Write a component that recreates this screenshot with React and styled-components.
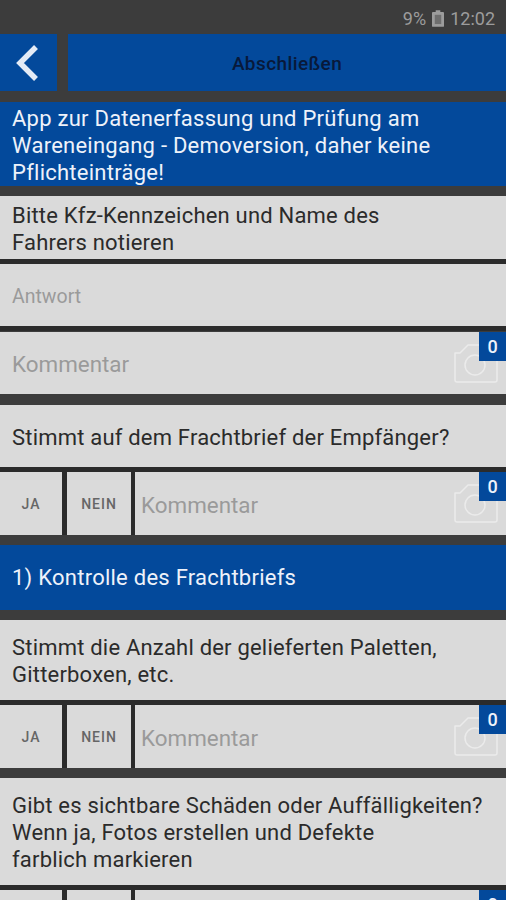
import React from 'react';
import styled, { createGlobalStyle } from 'styled-components';

const GlobalStyle = createGlobalStyle`
  html, body {
    margin: 0;
    padding: 0;
    background: #3c3c3c;
    overflow: hidden;
  }
`;

const Page = styled.div`
  width: 506px;
  height: 900px;
  overflow: hidden;
  background: #3c3c3c;
  font-family: Roboto, "Liberation Sans", sans-serif;
  display: flex;
  flex-direction: column;
`;

const StatusBar = styled.div`
  height: 34px;
  flex: none;
  display: flex;
  align-items: center;
  justify-content: flex-end;
  gap: 6px;
  padding: 2px 11px 0 0;
  box-sizing: border-box;
  color: #9c9c9c;
  font-size: 18px;
`;

const Header = styled.div`
  height: 57px;
  flex: none;
  display: flex;
  gap: 11px;
  margin-bottom: 11px;
`;

const BackButton = styled.div`
  width: 57px;
  background: #03499b;
  display: flex;
  align-items: center;
  padding-left: 15px;
  box-sizing: border-box;
`;

const TitleBar = styled.div`
  flex: 1;
  background: #03499b;
  color: #08193a;
  font-size: 19px;
  font-weight: 500;
  letter-spacing: 0.4px;
  display: flex;
  align-items: center;
  justify-content: center;
  padding-top: 2px;
  box-sizing: border-box;
`;

const Banner = styled.div`
  flex: none;
  height: ${(p) => p.$height}px;
  margin-bottom: 10px;
  background: #03499b;
  color: #eef2fa;
  font-size: 22px;
  letter-spacing: 0.25px;
  line-height: 27px;
  padding: ${(p) => p.$top}px 12px 0;
  box-sizing: border-box;
`;

const Question = styled.div`
  flex: none;
  height: ${(p) => p.$height}px;
  margin-bottom: 5px;
  background: #dadada;
  color: #2b2b2b;
  font-size: 22px;
  letter-spacing: 0.2px;
  line-height: 27px;
  padding: ${(p) => p.$top}px 12px 0;
  box-sizing: border-box;
  box-shadow: 0 5px 0 #2b2b2b;
`;

const Field = styled.div`
  position: relative;
  flex: ${(p) => (p.$grow ? 1 : 'none')};
  height: ${(p) => (p.$grow ? 63 : 62)}px;
  margin-bottom: ${(p) => (p.$grow ? 0 : p.$gap)}px;
  background: #dadada;
  color: #9a9a9a;
  font-size: ${(p) => p.$size}px;
  display: flex;
  align-items: center;
  padding: 2px 0 0 ${(p) => (p.$grow ? 6 : 12)}px;
  box-sizing: border-box;
  box-shadow: ${(p) => (p.$divider ? '0 5px 0 #2b2b2b' : 'none')};
`;

const AnswerRow = styled.div`
  flex: none;
  height: 63px;
  margin-bottom: 10px;
  display: flex;
  background: #2b2b2b;
`;

const ChoiceButton = styled.div`
  flex: none;
  width: ${(p) => p.$width}px;
  margin-right: ${(p) => p.$gap}px;
  background: #dadada;
  color: #666;
  font-size: 14px;
  font-weight: 500;
  letter-spacing: 1px;
  display: flex;
  align-items: center;
  justify-content: center;
`;

const CameraPlace = styled.div`
  position: absolute;
  top: 12px;
  right: 8px;
  line-height: 0;
`;

const Badge = styled.div`
  position: absolute;
  top: 0;
  right: 0;
  width: 27px;
  height: 29px;
  background: #03499b;
  color: #eef2fa;
  font-size: 18px;
  font-weight: 500;
  display: flex;
  align-items: center;
  justify-content: center;
`;

const BackIcon = () => (
  <svg width="26" height="38" viewBox="0 0 26 38" fill="none">
    <path d="M21 3 L5 19 L21 35" stroke="#e4ebf6" strokeWidth="5.5" />
  </svg>
);

const BatteryIcon = () => (
  <svg width="12" height="17" viewBox="0 0 13 18">
    <path d="M4 0h5v2h3a1 1 0 0 1 1 1v14a1 1 0 0 1-1 1H1a1 1 0 0 1-1-1V3a1 1 0 0 1 1-1h3z" fill="#9c9c9c" />
    <rect x="3" y="5" width="7" height="10" fill="#6e6e6e" />
  </svg>
);

const CameraIcon = () => (
  <svg width="44" height="39" viewBox="0 0 44 39" fill="none" stroke="#ebebeb" strokeWidth="1.5">
    <path d="M1 9 H6 L14 1 H32 V9 H41 Q43 9 43 11 V36 Q43 38 41 38 H3 Q1 38 1 36 Z" strokeLinejoin="round" />
    <circle cx="21" cy="21" r="10" />
  </svg>
);

const CommentField = ({ grow, gap }) => (
  <Field $grow={grow} $gap={gap} $size={22.4}>
    Kommentar
    <CameraPlace>
      <CameraIcon />
    </CameraPlace>
    <Badge>0</Badge>
  </Field>
);

const ChoiceRow = () => (
  <AnswerRow>
    <ChoiceButton $width={62} $gap={5}>JA</ChoiceButton>
    <ChoiceButton $width={64} $gap={4}>NEIN</ChoiceButton>
    <CommentField grow />
  </AnswerRow>
);

const App = () => (
  <Page>
    <GlobalStyle />
    <StatusBar>
      <span>9%</span>
      <BatteryIcon />
      <span>12:02</span>
    </StatusBar>
    <Header>
      <BackButton>
        <BackIcon />
      </BackButton>
      <TitleBar>Abschließen</TitleBar>
    </Header>
    <Banner $height={84} $top={3}>
      App zur Datenerfassung und Prüfung am
      <br />
      Wareneingang - Demoversion, daher keine
      <br />
      Pflichteinträge!
    </Banner>
    <Question $height={63} $top={6}>
      Bitte Kfz-Kennzeichen und Name des
      <br />
      Fahrers notieren
    </Question>
    <Field $gap={6} $size={19.5} $divider>Antwort</Field>
    <CommentField gap={11} />
    <Question $height={62} $top={19}>Stimmt auf dem Frachtbrief der Empfänger?</Question>
    <ChoiceRow />
    <Banner $height={65} $top={19}>1) Kontrolle des Frachtbriefs</Banner>
    <Question $height={80} $top={14}>
      Stimmt die Anzahl der gelieferten Paletten,
      <br />
      Gitterboxen, etc.
    </Question>
    <ChoiceRow />
    <Question $height={107} $top={14}>
      Gibt es sichtbare Schäden oder Auffälligkeiten?
      <br />
      Wenn ja, Fotos erstellen und Defekte
      <br />
      farblich markieren
    </Question>
    <ChoiceRow />
  </Page>
);

export default App;
